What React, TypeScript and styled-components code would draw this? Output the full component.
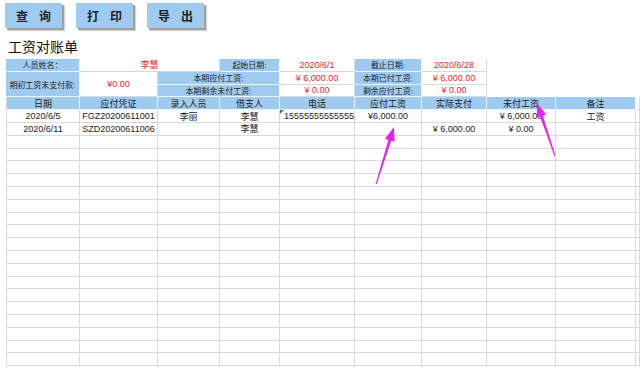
import React from 'react'
import styled, { createGlobalStyle } from 'styled-components'

const GlobalStyle = createGlobalStyle`
  body {
    margin: 0;
    background: #fff;
    font-family: "Liberation Sans", "Noto Sans CJK SC", sans-serif;
  }
`

const BLUE = '#9fcbf1'
const RED = '#e8231f'
const LINE = '#d9d9d9'

const Page = styled.div`
  position: relative;
  width: 640px;
  height: 368px;
  overflow: hidden;
`

const Toolbar = styled.div`
  display: flex;
  gap: 14px;
  padding: 3px 0 0 5px;
  height: 29px;
  box-sizing: border-box;
`

const ToolButton = styled.button`
  width: 57px;
  height: 25px;
  border: none;
  background: ${BLUE};
  box-shadow: 2px 2px 0 #a0a0a0, 3px 3px 1px #d4d4d4;
  font-family: "Noto Sans CJK SC", sans-serif;
  font-size: 12px;
  font-weight: 700;
  color: #222;
  letter-spacing: 11px;
  text-indent: 11px;
  padding: 0;
  display: flex;
  align-items: center;
  justify-content: center;
`

const Title = styled.div`
  font-family: "Noto Sans CJK SC", sans-serif;
  font-size: 14px;
  color: #111;
  height: 30px;
  line-height: 26px;
  padding: 4px 0 0 8px;
  box-sizing: border-box;
`

const Sheet = styled.div`
  margin-left: 6px;
  display: grid;
  grid-template-columns: 74px 78px 62px 60px 75px 67px 65px 69px 80px 1fr;
  grid-auto-rows: 12.8px;
`

const Cell = styled.div<{ $bg?: string; $color?: string; $align?: string; $col?: number; $row?: number; $plain?: boolean; $first?: boolean; $small?: boolean }>`
  grid-column: span ${p => p.$col || 1};
  grid-row: span ${p => p.$row || 1};
  background: ${p => p.$bg || '#fff'};
  color: ${p => p.$color || '#222'};
  border-right: 1px solid ${p => (p.$plain ? 'transparent' : p.$bg ? '#eef5fc' : LINE)};
  border-bottom: 1px solid ${p => (p.$plain ? 'transparent' : p.$bg ? '#eef5fc' : LINE)};
  border-left: ${p => (p.$first ? `1px solid ${LINE}` : 'none')};
  font-size: ${p => (p.$small ? '8px' : '9px')};
  font-family: "Liberation Sans", "Noto Sans CJK SC", sans-serif;
  display: flex;
  align-items: center;
  justify-content: ${p => p.$align || 'center'};
  padding: ${p => (p.$align === 'flex-start' ? '0 0 0 4px' : '0')};
  white-space: nowrap;
  overflow: hidden;
  position: relative;
  box-sizing: border-box;
`

const TextMark = styled.span`
  position: absolute;
  left: 0;
  top: 0;
  width: 0;
  height: 0;
  border-top: 4px solid #1e8e3e;
  border-right: 4px solid transparent;
`

const Overlay = styled.svg`
  position: absolute;
  left: 0;
  top: 0;
  pointer-events: none;
`

const headers = ['日期', '应付凭证', '录入人员', '借支人', '电话', '应付工资', '实际支付', '未付工资', '备注', '']

const rows: string[][] = [
  ['2020/6/5', 'FGZ20200611001', '李丽', '李慧', '15555555555555', '¥6,000.00', '', '¥ 6,000.00', '工资', ''],
  ['2020/6/11', 'SZD20200611006', '', '李慧', '', '', '¥ 6,000.00', '¥ 0.00', '', ''],
]

const blankCount = 18

const App = () => {
  const allRows = [...rows, ...Array.from({ length: blankCount }, () => Array(10).fill(''))]
  return (
    <Page>
      <GlobalStyle />
      <Toolbar>
        <ToolButton>查询</ToolButton>
        <ToolButton>打印</ToolButton>
        <ToolButton>导出</ToolButton>
      </Toolbar>
      <Title>工资对账单</Title>
      <Sheet>
        <Cell $bg={BLUE} $small>人员姓名：</Cell>
        <Cell $col={2} $color={RED}>李慧</Cell>
        <Cell $bg={BLUE} $small>起始日期:</Cell>
        <Cell $color={RED}>2020/6/1</Cell>
        <Cell $bg={BLUE} $small>截止日期:</Cell>
        <Cell $color={RED}>2020/6/28</Cell>
        <Cell $col={3} $plain />

        <Cell $bg={BLUE} $row={2} $small>期初工资未支付款:</Cell>
        <Cell $row={2} $color={RED}>¥0.00</Cell>
        <Cell $bg={BLUE} $col={2} $small>本期应付工资:</Cell>
        <Cell $color={RED}>¥ 6,000.00</Cell>
        <Cell $bg={BLUE} $small>本期已付工资:</Cell>
        <Cell $color={RED}>¥ 6,000.00</Cell>
        <Cell $col={3} $plain />

        <Cell $bg={BLUE} $col={2} $small>本期剩余未付工资:</Cell>
        <Cell $color={RED}>¥ 0.00</Cell>
        <Cell $bg={BLUE} $small>剩余应付工资:</Cell>
        <Cell $color={RED}>¥ 0.00</Cell>
        <Cell $col={3} $plain />

        {headers.map((h, i) => (
          <Cell key={'h' + i} $bg={i < 9 ? BLUE : undefined} $first={i === 0}>{h}</Cell>
        ))}

        {allRows.map((r, ri) =>
          r.map((v, ci) => (
            <Cell key={ri + '-' + ci} $first={ci === 0} $align={ci === 4 && v ? 'flex-start' : undefined}>
              {ci === 4 && v ? <TextMark /> : null}
              {v}
            </Cell>
          ))
        )}
      </Sheet>
      <Overlay width="640" height="368" viewBox="0 0 640 368">
        <polygon
          fill="#e522e8"
          points="376.5,184.2 391.2,140.8 394.6,141.8 394,127 385,138.8 388.4,139.9 375.5,183.9"
        />
        <polygon
          fill="#e522e8"
          points="555.5,155.8 542.9,115.7 546.2,114.6 537,103 536.8,117.8 540.1,116.7 554.5,156.2"
        />
      </Overlay>
    </Page>
  )
}

export default App
